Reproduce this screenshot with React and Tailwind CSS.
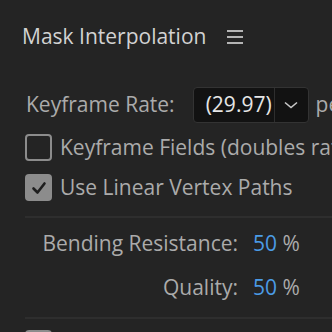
import React from 'react';

const Checkbox = ({ checked }) => (
  <div
    className={
      'w-[27px] h-[27px] rounded-[4px] shrink-0 flex items-center justify-center ' +
      (checked ? 'bg-[#8c8c8c]' : 'border-[2.5px] border-[#8c8c8c]')
    }
  >
    {checked && (
      <svg width="18" height="18" viewBox="0 0 18 18" fill="none">
        <path d="M3.5 9.5 L7.5 13.5 L14.5 4.5" stroke="#1e1e1e" strokeWidth="2.6" strokeLinecap="round" strokeLinejoin="round" />
      </svg>
    )}
  </div>
);

const App = () => {
  return (
    <div className="w-[332px] h-[332px] bg-[#242424] overflow-hidden whitespace-nowrap font-['Open_Sans',sans-serif] text-[21px] text-[#ababab]">
      <div className="flex items-center h-[30px] mt-[22px] pl-[22px] gap-[21px]">
        <span className="text-[21px] text-[#d2d2d2]">Mask Interpolation</span>
        <svg width="16" height="16" viewBox="0 0 16 16">
          <rect x="0" y="1" width="16" height="2" fill="#b4b4b4" />
          <rect x="0" y="7" width="16" height="2" fill="#b4b4b4" />
          <rect x="0" y="13" width="16" height="2" fill="#b4b4b4" />
        </svg>
      </div>

      <div className="flex items-center h-[36px] mt-[35px] pl-[26px]">
        <span>Keyframe Rate:</span>
        <div className="ml-[18px] flex w-[116px] h-[36px] rounded-[4px] border border-[#333333] bg-[#121212] shrink-0">
          <div className="flex-1 flex items-center justify-end pr-[2px] text-[#e6e6e6]">(29.97)</div>
          <div className="w-[34px] border-l border-[#2e2e2e] flex items-center justify-center">
            <svg width="14" height="8" viewBox="0 0 14 8" fill="none">
              <path d="M1 1.5 L7 6.5 L13 1.5" stroke="#c8c8c8" strokeWidth="1.6" />
            </svg>
          </div>
        </div>
        <span className="ml-[7px]">per second</span>
      </div>

      <div className="flex items-center h-[27px] gap-[8px] mt-[11px] pl-[25px]">
        <Checkbox checked={false} />
        <span>Keyframe Fields (doubles rate)</span>
      </div>
      <div className="flex items-center h-[27px] gap-[8px] mt-[13px] pl-[25px]">
        <Checkbox checked />
        <span>Use Linear Vertex Paths</span>
      </div>

      <div className="ml-[25px] mt-[15px] h-[2px] bg-[#2e2e2e]" />

      <div className="grid grid-cols-[238px_auto] gap-x-[15px] mt-[10px] items-center">
        <span className="text-right h-[30px] leading-[30px]">Bending Resistance:</span>
        <span className="h-[30px] leading-[30px]"><span className="text-[#4b9be6]">50</span> %</span>
        <span className="text-right h-[30px] leading-[30px] mt-[14px]">Quality:</span>
        <span className="h-[30px] leading-[30px] mt-[14px]"><span className="text-[#4b9be6]">50</span> %</span>
      </div>

      <div className="ml-[25px] mt-[15px] h-[2px] bg-[#2e2e2e]" />
      <div className="mt-[11px] pl-[25px]">
        <Checkbox checked />
      </div>
    </div>
  );
};

export default App;
